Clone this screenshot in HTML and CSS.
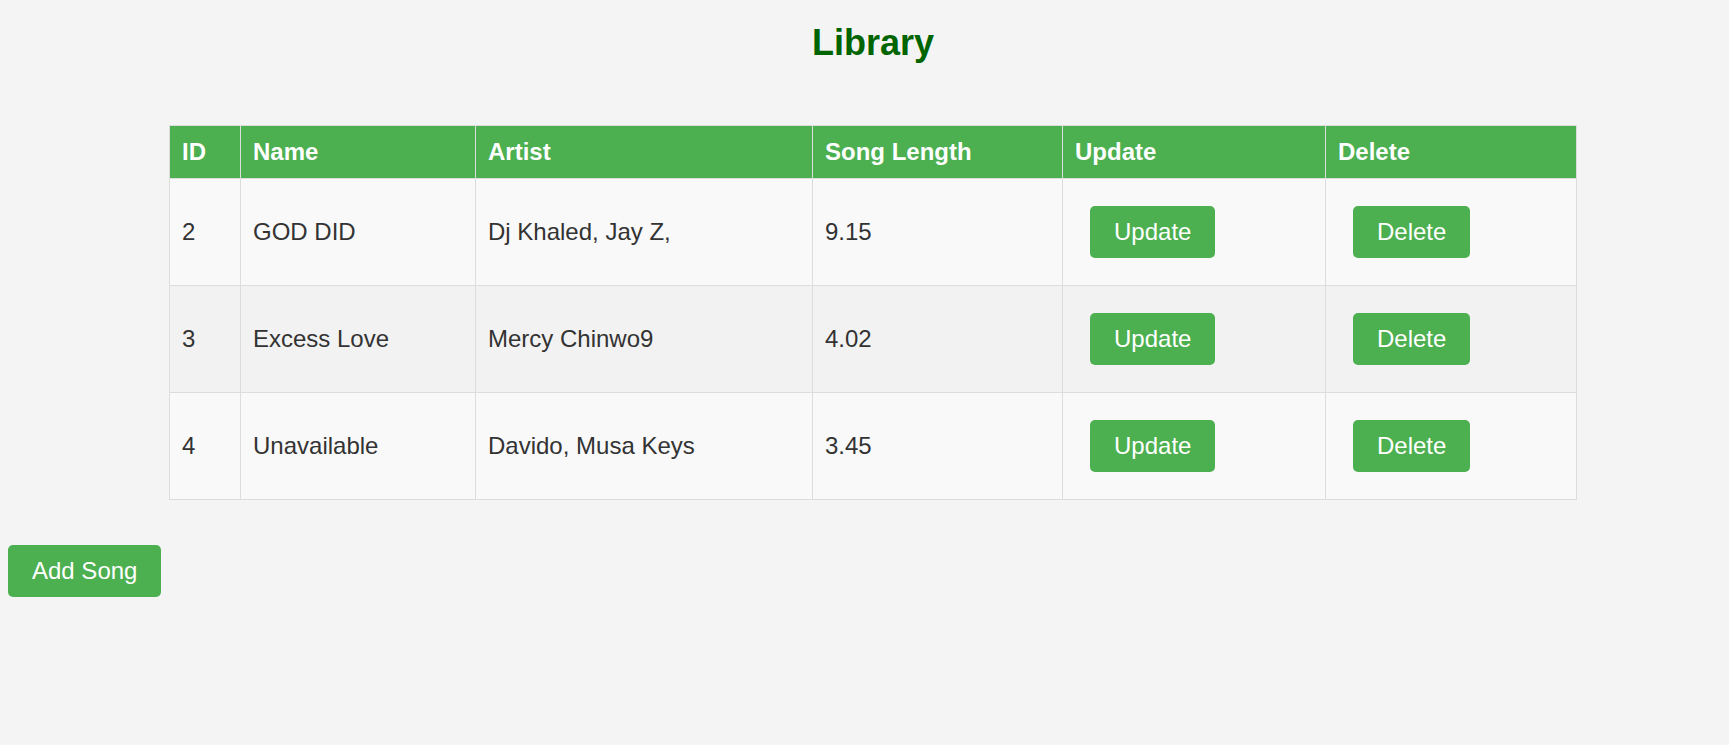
FILE: index.html
```html
<!DOCTYPE html>
<html lang="en">
<head>
<meta charset="utf-8">
<title>Library</title>
<link rel="stylesheet" href="styles.css">
</head>
<body>
  <section class="library">
    <h1 class="title">Library</h1>
    <table class="songs">
      <colgroup>
        <col class="c-id">
        <col class="c-name">
        <col class="c-artist">
        <col class="c-length">
        <col class="c-update">
        <col class="c-delete">
      </colgroup>
      <thead>
        <tr>
          <th>ID</th>
          <th>Name</th>
          <th>Artist</th>
          <th>Song Length</th>
          <th>Update</th>
          <th>Delete</th>
        </tr>
      </thead>
      <tbody>
        <tr>
          <td>2</td>
          <td>GOD DID</td>
          <td>Dj Khaled, Jay Z,</td>
          <td>9.15</td>
          <td><button class="btn btn-row">Update</button></td>
          <td><button class="btn btn-row">Delete</button></td>
        </tr>
        <tr>
          <td>3</td>
          <td>Excess Love</td>
          <td>Mercy Chinwo9</td>
          <td>4.02</td>
          <td><button class="btn btn-row">Update</button></td>
          <td><button class="btn btn-row">Delete</button></td>
        </tr>
        <tr>
          <td>4</td>
          <td>Unavailable</td>
          <td>Davido, Musa Keys</td>
          <td>3.45</td>
          <td><button class="btn btn-row">Update</button></td>
          <td><button class="btn btn-row">Delete</button></td>
        </tr>
      </tbody>
    </table>
  </section>
  <div class="actions">
    <button class="btn">Add Song</button>
  </div>
</body>
</html>
```
FILE: styles.css
```css
html, body {
  background: #f4f4f4;
}
body {
  margin: 0;
  padding: 8px;
  font-family: "Liberation Sans", Arial, sans-serif;
  font-size: 24px;
  color: #333;
}
.library {
  padding-left: 17px;
}
.title {
  margin: 14px 0 0;
  text-align: center;
  font-size: 36px;
  font-weight: bold;
  color: #006400;
}
.songs {
  margin: 61px auto 0;
  width: 1407px;
  table-layout: fixed;
  border-collapse: collapse;
}
.c-id { width: 71px; }
.c-name { width: 235px; }
.c-artist { width: 337px; }
.c-length { width: 250px; }
.c-update { width: 263px; }
.c-delete { width: 251px; }
.songs th,
.songs td {
  border: 1px solid #ddd;
  padding: 12px;
  text-align: left;
  vertical-align: middle;
}
.songs th {
  background: #4caf50;
  color: #fff;
  font-weight: bold;
}
.songs td {
  background: #f9f9f9;
}
.songs tbody tr:nth-child(even) td {
  background: #f2f2f2;
}
.btn {
  display: inline-block;
  background: #4caf50;
  color: #fff;
  border: none;
  border-radius: 5px;
  padding: 12px 24px;
  font-family: "Liberation Sans", Arial, sans-serif;
  font-size: 24px;
  line-height: normal;
  cursor: pointer;
}
.btn-row {
  margin: 15px;
}
.actions {
  margin-top: 45px;
}
```
